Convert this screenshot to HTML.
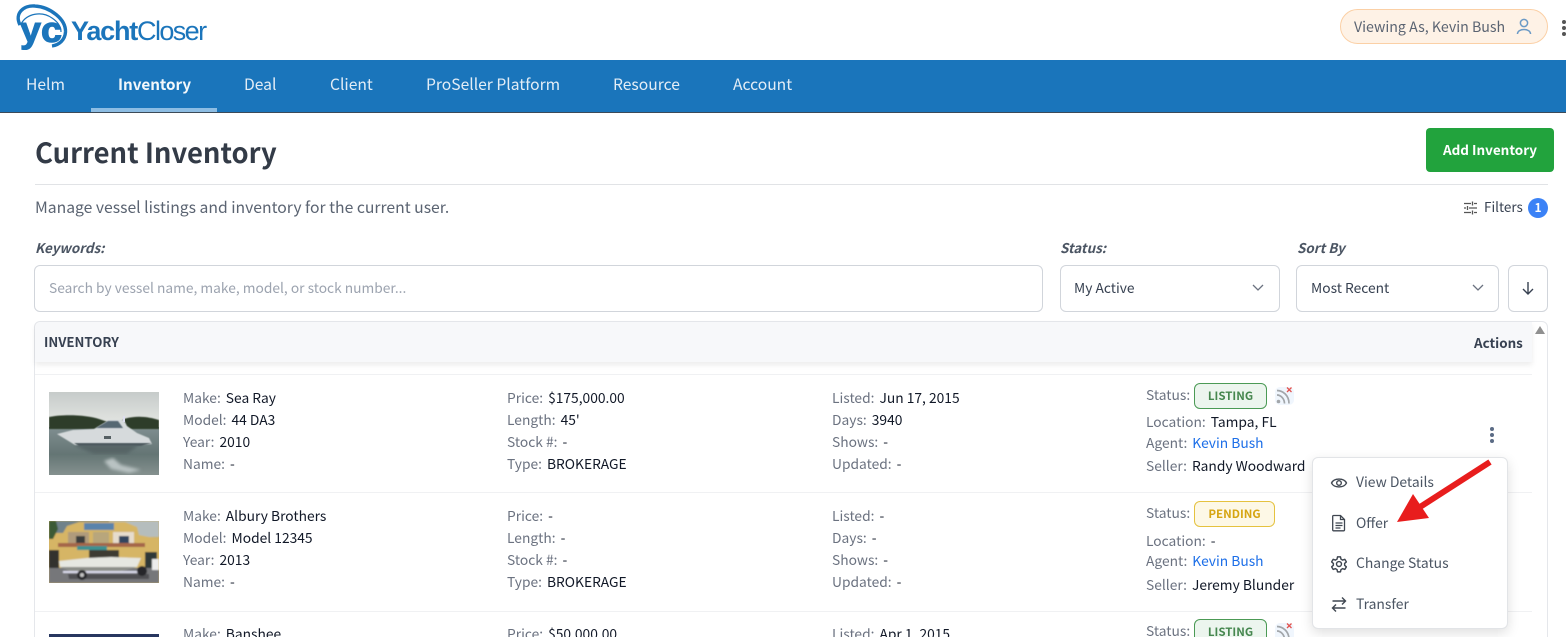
<!DOCTYPE html>
<html><head><meta charset="utf-8">
<style>
*{box-sizing:border-box}
html,body{margin:0;padding:0;width:1566px;height:637px;overflow:hidden;background:#fff;font-family:"Noto Sans CJK JP","Liberation Sans",sans-serif}
#w{position:absolute;left:0;top:0;width:1566px;height:637px;overflow:hidden;background:#fff}
.t{position:absolute;white-space:nowrap;line-height:20px;font-size:13.8px;color:#6b7280;margin-top:-1px}
.v{color:#111827;margin-left:5px}
.nav{position:absolute;top:74px;font-size:15.65px;line-height:20px;color:#e3edf6;white-space:nowrap}
.box{position:absolute;background:#fff;border:1px solid #d1d5db;border-radius:6px}
.badge{position:absolute;height:26px;border-radius:6px;font-size:11.5px;font-weight:700;line-height:24px;text-align:center}
.g{background:#ecf5ee;border:1px solid #4b9a55;color:#46874f}
.y{background:#fdf8e6;border:1px solid #e5c23f;color:#d6a512}
.line{position:absolute;left:35px;width:1497px;height:1px;background:#f0f1f3}
.m{position:absolute;left:1356px;font-size:13.9px;line-height:20px;color:#4b5563;white-space:nowrap}
.lb{font-style:italic;font-weight:700;color:#4b5563;font-size:13.4px}
</style></head><body><div id="w">

<!-- logo -->
<svg style="position:absolute;left:0;top:0" width="80" height="56" viewBox="0 0 80 56">
<path d="M20 25C14 13 24 5 35 6C50 7 66 19 65.500 32C65 40 59 45 52 46" fill="none" stroke="#1b75bb" stroke-width="3.400"/>
<path d="M21 24C27 13 42 11 52 18C58 22 61 27 61 32" fill="none" stroke="#1b75bb" stroke-width="1.200"/>
<text x="20" y="42" font-family="Liberation Sans" font-weight="700" font-size="36" fill="#1b75bb" textLength="42" lengthAdjust="spacingAndGlyphs" stroke="#1b75bb" stroke-width="1.100">yc</text>
</svg>
<div style="position:absolute;left:71px;top:14px;font:700 27px/34px 'Liberation Sans',sans-serif;color:#1b75bb;letter-spacing:-1.2px;white-space:nowrap">Yacht<span style="font-weight:400;letter-spacing:-1.6px">Closer</span></div>

<!-- viewing as -->
<div style="position:absolute;left:1340px;top:9px;width:208px;height:35px;background:#fef2e6;border:1px solid #fbd0a6;border-radius:18px"></div>
<div class="t" style="left:1354px;top:17px;font-size:14.2px;color:#5b6472;margin-top:0">Viewing As, Kevin Bush</div>
<svg style="position:absolute;left:1515px;top:17px" width="18" height="19" viewBox="0 0 18 19" fill="none" stroke="#6b9ac6" stroke-width="1.500"><circle cx="9" cy="6" r="3.600"/><path d="M2.500 17c0-6 13-6 13 0"/></svg>
<div style="position:absolute;left:1562px;top:20px;width:4px;height:4px;border-radius:2px;background:#555;box-shadow:0 6px 0 #555,0 12px 0 #555"></div>

<!-- nav -->
<div style="position:absolute;left:0;top:60px;width:1566px;height:53px;background:#1a75bb;border-bottom:1px solid #3c4a58"></div>
<div style="position:absolute;left:91px;top:108px;width:126px;height:4px;background:#8dbde3"></div>
<div class="nav" style="left:26px">Helm</div>
<div class="nav" style="left:118px;font-weight:700;color:#f4f8fb;font-size:15.2px">Inventory</div>
<div class="nav" style="left:244px">Deal</div>
<div class="nav" style="left:330px">Client</div>
<div class="nav" style="left:426px">ProSeller Platform</div>
<div class="nav" style="left:613px">Resource</div>
<div class="nav" style="left:733px">Account</div>

<!-- heading -->
<div style="position:absolute;left:35px;top:131px;font-size:27.4px;line-height:40px;font-weight:700;color:#333b47;white-space:nowrap">Current Inventory</div>
<div style="position:absolute;left:1426px;top:128px;width:128px;height:44px;background:#22a33d;border-radius:4px;color:#fff;font-size:13.5px;font-weight:700;line-height:43px;text-align:center">Add Inventory</div>
<div style="position:absolute;left:35px;top:184px;width:1513px;height:1px;background:#e1e3e6"></div>
<div class="t" style="left:35px;top:197px;font-size:15.73px;color:#5b6472;margin-top:0">Manage vessel listings and inventory for the current user.</div>

<!-- filters -->
<svg style="position:absolute;left:1463px;top:201px" width="15" height="14" viewBox="0 0 15 14" stroke="#555" stroke-width="1.300" fill="none"><path d="M1 2.500h7M11 2.500h3M9.500 .5v4M1 7h2M6 7h8M4.500 5v4M1 11.500h7M11 11.500h3M9.500 9.500v4"/></svg>
<div class="t" style="left:1484px;top:197px;font-size:13.5px;color:#374151">Filters</div>
<div style="position:absolute;left:1528px;top:198px;width:20px;height:20px;border-radius:10px;background:#3b82f6;color:#fff;font-size:12px;line-height:20px;text-align:center;font-weight:700">1</div>

<!-- search row -->
<div class="t lb" style="left:35px;top:238px">Keywords:</div>
<div class="t lb" style="left:1060px;top:238px">Status:</div>
<div class="t lb" style="left:1297px;top:238px">Sort By</div>
<div class="box" style="left:34px;top:265px;width:1009px;height:47px"></div>
<div class="t" style="left:49px;top:278px;color:#9ca3af;font-size:13.77px">Search by vessel name, make, model, or stock number...</div>
<div class="box" style="left:1060px;top:265px;width:220px;height:47px"></div>
<div class="t" style="left:1074px;top:278px;color:#374151">My Active</div>
<svg style="position:absolute;left:1251px;top:282px" width="14" height="12" viewBox="0 0 14 12" fill="none" stroke="#6b7280" stroke-width="1.300"><path d="M2 3l5 5 5-5"/></svg>
<div class="box" style="left:1296px;top:265px;width:203px;height:47px"></div>
<div class="t" style="left:1311px;top:278px;color:#374151">Most Recent</div>
<svg style="position:absolute;left:1471px;top:282px" width="14" height="12" viewBox="0 0 14 12" fill="none" stroke="#6b7280" stroke-width="1.300"><path d="M2 3l5 5 5-5"/></svg>
<div class="box" style="left:1508px;top:265px;width:40px;height:47px"></div>
<svg style="position:absolute;left:1520px;top:280px" width="16" height="16" viewBox="0 0 16 16" fill="none" stroke="#374151" stroke-width="1.400"><path d="M8 2v12M3 9l5 5 5-5"/></svg>

<!-- table -->
<div style="position:absolute;left:34px;top:321px;width:1514px;height:330px;border:1px solid #e5e7eb;border-radius:6px 6px 0 0"></div>
<div style="position:absolute;left:35px;top:322px;width:1497px;height:40px;background:#f7f8fa;box-shadow:0 3px 6px rgba(0,0,0,.08);border-radius:6px 0 0 0"></div>
<div class="t" style="left:44px;top:332px;font-weight:700;color:#374151;font-size:13.2px;margin-top:0">INVENTORY</div>
<div class="t" style="left:1474px;top:332px;font-weight:700;color:#374151;font-size:13.4px;margin-top:0">Actions</div>
<div style="position:absolute;left:1535px;top:326px;width:0;height:0;border-left:5px solid transparent;border-right:5px solid transparent;border-bottom:8px solid #909090"></div>
<div class="line" style="top:374px"></div>
<div class="line" style="top:492px"></div>
<div class="line" style="top:611px"></div>

<!-- thumb 1 -->
<svg style="position:absolute;left:49px;top:392px" width="110" height="83" viewBox="0 0 110 83">
<defs><linearGradient id="s1" x1="0" y1="0" x2="0" y2="1"><stop offset="0" stop-color="#c6cbca"/><stop offset="1" stop-color="#e6e8e4"/></linearGradient>
<linearGradient id="w1" x1="0" y1="0" x2="0" y2="1"><stop offset="0" stop-color="#a3adae"/><stop offset=".45" stop-color="#7d8c8e"/><stop offset=".75" stop-color="#647574"/><stop offset="1" stop-color="#85918f"/></linearGradient>
<filter id="b1"><feGaussianBlur stdDeviation=".6"/></filter><filter id="b2"><feGaussianBlur stdDeviation="1.500"/></filter></defs>
<rect width="110" height="83" fill="url(#w1)"/><rect width="110" height="35" fill="url(#s1)"/>
<path d="M0 25C15 22 38 23 50 27L68 33L75 27C88 23 100 25 110 28V37H0Z" fill="#2f3e2c" filter="url(#b1)"/>
<path d="M24 53H90L78 62H45Z" fill="#566566" filter="url(#b2)"/>
<path d="M55 69L64 66L72 73L92 78L80 81L62 77Z" fill="#b9c3c3" filter="url(#b2)"/>
<path d="M8 42L24 38L45 37L60 28H75L78 34L88 41L100 46L103 52L92 53H26Z" fill="#d6dadc" filter="url(#b1)"/>
<path d="M47 36L59 29H69L74 36Z" fill="#566873" filter="url(#b1)"/>
<rect x="55" y="44" width="7" height="3" fill="#555f63"/>
<path d="M25 51L103 51L92 54H30Z" fill="#4e5a5e" filter="url(#b1)"/>
<rect x="74" y="24" width="2" height="6" fill="#dde"/>
</svg>

<!-- thumb 2 -->
<svg style="position:absolute;left:49px;top:521px" width="110" height="62" viewBox="0 0 110 62">
<defs><filter id="b3"><feGaussianBlur stdDeviation=".8"/></filter></defs>
<rect width="110" height="62" fill="#d0b265"/>
<g filter="url(#b3)">
<rect width="60" height="14" fill="#6f828a"/><rect x="60" width="50" height="16" fill="#b5bdbd"/>
<path d="M0 12L14 12L18 5L30 1H76L88 6L90 14L110 18V46H0Z" fill="#d6b565"/>
<path d="M0 0h7l2 8-5 10H0Z" fill="#3b5a35"/>
<path d="M35 2h30v7H35Z" fill="#5a83ab"/>
<rect x="19" y="11" width="21" height="12" fill="#b09b7c"/><rect x="27" y="15" width="9" height="8" fill="#3a3c3e"/>
<rect x="44" y="11" width="16" height="12" fill="#b8a67c"/>
<rect x="64" y="11" width="21" height="13" fill="#e6dccd"/><rect x="70" y="15" width="10" height="8" fill="#33445e"/>
<rect x="9" y="22" width="87" height="4" fill="#a4664a"/>
<rect x="0" y="29" width="10" height="18" fill="#33332e"/><rect x="96" y="31" width="12" height="16" fill="#2f3739"/>
<rect x="28" y="25" width="30" height="4" fill="#3e9191"/>
<rect x="40" y="29" width="30" height="8" fill="#3e3a30"/>
<rect x="0" y="47" width="110" height="15" fill="#76777a"/>
<path d="M19 53H100V58H20Z" fill="#4f5052"/>
<path d="M10 40L38 37L62 36L92 37L88 46L72 50H22L11 46Z" fill="#e6e7e1"/>
<path d="M11 46H88L72 50H22Z" fill="#8c8e88"/>
<rect x="14" y="50" width="78" height="2" fill="#dde"/>
<circle cx="33" cy="54" r="5" fill="#26282a"/><circle cx="33" cy="54" r="2" fill="#c4c4c4"/>
<circle cx="93" cy="50" r="5" fill="#26282a"/>
<rect x="103" y="38" width="7" height="11" fill="#ececec"/>
</g></svg>

<!-- thumb 3 -->
<svg style="position:absolute;left:49px;top:634px" width="110" height="3"><rect width="110" height="3" fill="#27365f"/></svg>

<!-- row 1 -->
<div class="t" style="left:183px;top:388px">Make:<span class="v">Sea Ray</span></div>
<div class="t" style="left:183px;top:410px">Model:<span class="v">44 DA3</span></div>
<div class="t" style="left:183px;top:432px">Year:<span class="v">2010</span></div>
<div class="t" style="left:183px;top:454px">Name:<span class="v">-</span></div>
<div class="t" style="left:507px;top:388px">Price:<span class="v">$175,000.00</span></div>
<div class="t" style="left:507px;top:410px">Length:<span class="v">45'</span></div>
<div class="t" style="left:507px;top:432px">Stock #:<span class="v">-</span></div>
<div class="t" style="left:507px;top:454px">Type:<span class="v">BROKERAGE</span></div>
<div class="t" style="left:832px;top:388px">Listed:<span class="v">Jun 17, 2015</span></div>
<div class="t" style="left:832px;top:410px">Days:<span class="v">3940</span></div>
<div class="t" style="left:832px;top:432px">Shows:<span class="v">-</span></div>
<div class="t" style="left:832px;top:454px">Updated:<span class="v">-</span></div>
<div class="t" style="left:1146px;top:385px">Status:</div>
<div class="badge g" style="left:1194px;top:383px;width:73px">LISTING</div>
<svg style="position:absolute;left:1274px;top:385px" width="22" height="22" viewBox="0 0 22 22" fill="none"><rect x="1" y="2" width="19" height="18" rx="5" fill="#f0f6fd"/><g stroke="#a2a6aa" stroke-width="1.700"><path d="M3 5.500c6 0 12 5 12 13M3 10c4 0 7.500 4 7.500 8.500"/></g><circle cx="4.500" cy="16.500" r="1.800" fill="#a2a6aa"/><path d="M13 2.500l4.500 4.500M17.500 2.500L13 7" stroke="#e2534f" stroke-width="1.300"/></svg>
<div class="t" style="left:1146px;top:412px">Location:<span class="v">Tampa, FL</span></div>
<div class="t" style="left:1146px;top:433px">Agent:<span class="v" style="color:#1d6fe8">Kevin Bush</span></div>
<div class="t" style="left:1146px;top:456px">Seller:<span class="v">Randy Woodward</span></div>

<!-- row 2 -->
<div class="t" style="left:183px;top:506px">Make:<span class="v">Albury Brothers</span></div>
<div class="t" style="left:183px;top:528px">Model:<span class="v">Model 12345</span></div>
<div class="t" style="left:183px;top:550px">Year:<span class="v">2013</span></div>
<div class="t" style="left:183px;top:572px">Name:<span class="v">-</span></div>
<div class="t" style="left:507px;top:506px">Price:<span class="v">-</span></div>
<div class="t" style="left:507px;top:528px">Length:<span class="v">-</span></div>
<div class="t" style="left:507px;top:550px">Stock #:<span class="v">-</span></div>
<div class="t" style="left:507px;top:572px">Type:<span class="v">BROKERAGE</span></div>
<div class="t" style="left:832px;top:506px">Listed:<span class="v">-</span></div>
<div class="t" style="left:832px;top:528px">Days:<span class="v">-</span></div>
<div class="t" style="left:832px;top:550px">Shows:<span class="v">-</span></div>
<div class="t" style="left:832px;top:572px">Updated:<span class="v">-</span></div>
<div class="t" style="left:1146px;top:503px">Status:</div>
<div class="badge y" style="left:1194px;top:501px;width:81px">PENDING</div>
<div class="t" style="left:1146px;top:531px">Location:<span class="v">-</span></div>
<div class="t" style="left:1146px;top:551px">Agent:<span class="v" style="color:#1d6fe8">Kevin Bush</span></div>
<div class="t" style="left:1146px;top:575px">Seller:<span class="v">Jeremy Blunder</span></div>

<!-- row 3 -->
<div class="t" style="left:183px;top:624px">Make:<span class="v">Banshee</span></div>
<div class="t" style="left:507px;top:624px">Price:<span class="v">$50,000.00</span></div>
<div class="t" style="left:832px;top:624px">Listed:<span class="v">Apr 1, 2015</span></div>
<div class="t" style="left:1146px;top:621px">Status:</div>
<div class="badge g" style="left:1194px;top:619px;width:73px">LISTING</div>
<svg style="position:absolute;left:1274px;top:621px" width="22" height="22" viewBox="0 0 22 22" fill="none"><rect x="1" y="2" width="19" height="18" rx="5" fill="#f0f6fd"/><g stroke="#a2a6aa" stroke-width="1.700"><path d="M3 5.500c6 0 12 5 12 13M3 10c4 0 7.500 4 7.500 8.500"/></g><path d="M13 2.500l4.500 4.500M17.500 2.500L13 7" stroke="#e2534f" stroke-width="1.300"/></svg>

<!-- kebab -->
<div style="position:absolute;left:1490px;top:427px;width:4px;height:4px;border-radius:2px;background:#5b6b85;box-shadow:0 6px 0 #5b6b85,0 12px 0 #5b6b85"></div>

<!-- dropdown menu -->
<div style="position:absolute;left:1312px;top:457px;width:196px;height:172px;background:#fff;border-radius:6px;border:1px solid #e2e4e7;box-shadow:0 4px 12px rgba(0,0,0,.13)"></div>
<svg style="position:absolute;left:1330px;top:474px" width="18" height="18" viewBox="0 0 18 18" fill="none" stroke="#3f4650" stroke-width="1.400"><path d="M1.500 9C4 3.800 14 3.800 16.500 9 14 14.200 4 14.200 1.500 9Z"/><circle cx="9" cy="9" r="2.300"/></svg>
<div class="m" style="top:472px">View Details</div>
<svg style="position:absolute;left:1331px;top:514px" width="16" height="18" viewBox="0 0 16 18" fill="none" stroke="#3f4650" stroke-width="1.300"><path d="M2.500 1.500h7l4 4v10.500a.8.8 0 0 1-.8.8H2.500a.8.8 0 0 1-.8-.8V2.300a.8.8 0 0 1 .8-.8ZM9.500 1.500v4h4M4.500 9h7M4.500 11.500h7M4.500 14h5"/></svg>
<div class="m" style="top:513px">Offer</div>
<svg style="position:absolute;left:1330px;top:555px" width="18" height="18" viewBox="0 0 24 24" fill="none" stroke="#3f4650" stroke-width="1.900" stroke-linejoin="round"><path d="M10 2.500h4l.6 3 2.300 1.300 2.900-1 2 3.400-2.300 2v2.600l2.300 2-2 3.400-2.900-1-2.300 1.300-.6 3h-4l-.6-3-2.300-1.300-2.900 1-2-3.400 2.300-2v-2.600l-2.300-2 2-3.400 2.900 1 2.300-1.300Z"/><circle cx="12" cy="12" r="3.300"/></svg>
<div class="m" style="top:553px">Change Status</div>
<svg style="position:absolute;left:1331px;top:596px" width="16" height="17" viewBox="0 0 16 17" fill="none" stroke="#3f4650" stroke-width="1.400"><path d="M1.500 5h13M11 1.500l3.500 3.500L11 8.500M14.500 12h-13M5 8.500L1.500 12 5 15.500"/></svg>
<div class="m" style="top:594px">Transfer</div>

<!-- red arrow -->
<svg style="position:absolute;left:1390px;top:455px" width="105" height="75" viewBox="0 0 105 75"><path d="M100 7L30 52" stroke="#e81d1d" stroke-width="6" fill="none"/><path d="M7 67L23 39L39 63Z" fill="#e81d1d"/></svg>

</div></body></html>
